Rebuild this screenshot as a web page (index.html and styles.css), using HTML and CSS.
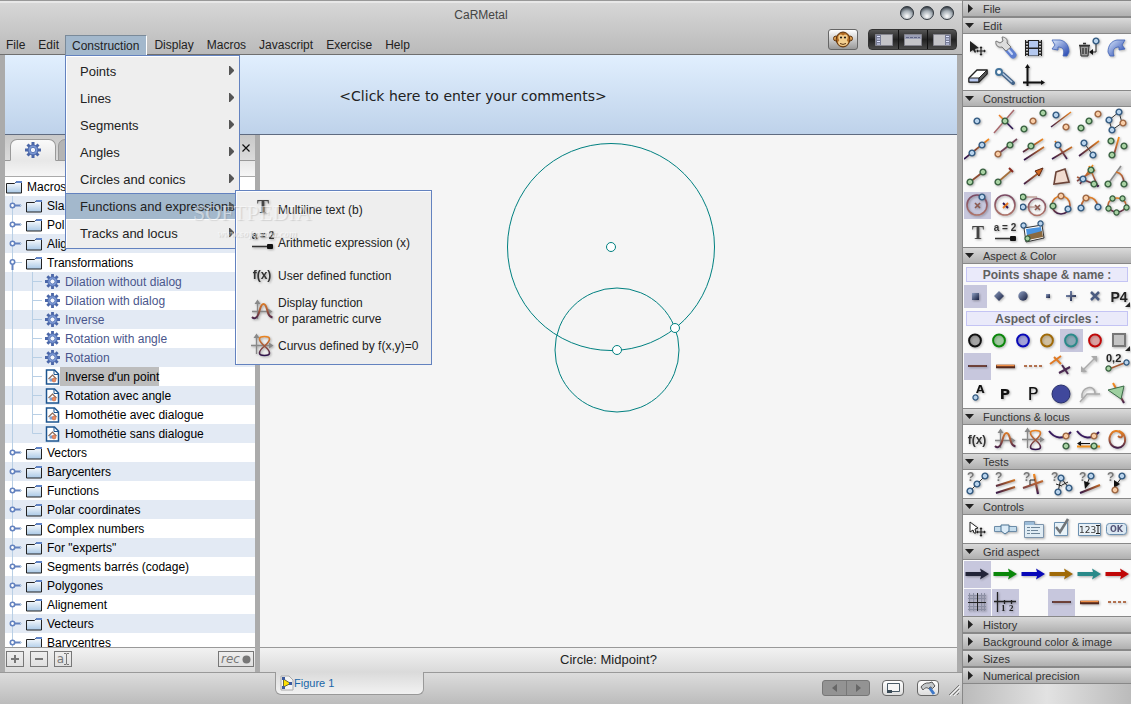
FILE: index.html
```html
<!DOCTYPE html>
<html lang="en">
<head>
    <meta charset="utf-8">
    <title>CaRMetal</title>
    <link rel="stylesheet" href="styles.css">
</head>
<body>
    <!-- Shared icons -->
    <svg class="defs" width="0" height="0" aria-hidden="true">
        <defs>
            <linearGradient id="warm" gradientUnits="userSpaceOnUse" x1="3" y1="24" x2="24" y2="3">
                <stop offset="0" stop-color="#28104e"/><stop offset=".5" stop-color="#8c4a30"/><stop offset="1" stop-color="#f58a1c"/>
            </linearGradient>
            <linearGradient id="warmDown" gradientUnits="userSpaceOnUse" x1="0" y1="3" x2="0" y2="24">
                <stop offset="0" stop-color="#f58a1c"/><stop offset=".5" stop-color="#a65a3c"/><stop offset="1" stop-color="#28104e"/>
            </linearGradient>
            <linearGradient id="rose" gradientUnits="userSpaceOnUse" x1="0" y1="3" x2="0" y2="24">
                <stop offset="0" stop-color="#7a4a64"/><stop offset="1" stop-color="#b07468"/>
            </linearGradient>
            <linearGradient id="folderFill" x1="0" y1="0" x2="0" y2="1">
                <stop offset="0" stop-color="#fff"/><stop offset="1" stop-color="#a9c8e6"/>
            </linearGradient>
            <linearGradient id="blueFill" x1="0" y1="0" x2="1" y2="1">
                <stop offset="0" stop-color="#dbe9fb"/><stop offset="1" stop-color="#1d3fae"/>
            </linearGradient>
            <linearGradient id="slate" x1="0" y1="0" x2="1" y2="1">
                <stop offset="0" stop-color="#8fa0c4"/><stop offset="1" stop-color="#141c3c"/>
            </linearGradient>
            <radialGradient id="ball" cx=".5" cy=".75" r=".7">
                <stop offset="0" stop-color="#fff"/><stop offset=".6" stop-color="#a4adb4"/><stop offset="1" stop-color="#3c444c"/>
            </radialGradient>
        </defs>
        <symbol id="blue" viewBox="0 0 8 8"><circle cx="4" cy="4" r="2.9" fill="#b9d3ec" stroke="#30587f" stroke-width="1.4"/></symbol>
        <symbol id="green" viewBox="0 0 8 8"><circle cx="4" cy="4" r="2.9" fill="#a9d3a4" stroke="#37603f" stroke-width="1.4"/></symbol>
        <symbol id="orange" viewBox="0 0 8 8"><circle cx="4" cy="4" r="2.9" fill="#f8cda6" stroke="#9c6440" stroke-width="1.4"/></symbol>

        <symbol id="down" viewBox="0 0 11 11"><path d="M1 3h9L5.500 8z" fill="#222"/></symbol>
        <symbol id="right" viewBox="0 0 11 11"><path d="M4 1v9l5-4.500z" fill="#222"/></symbol>
        <symbol id="submenu" viewBox="0 0 6 9"><path d="M0 0h1l4 4v1L1 9H0z" fill="#555"/></symbol>

        <symbol id="folder" viewBox="0 0 16 14">
            <path d="M.5 3.500h8l2-2h5v11.500H.5z" fill="url(#folderFill)" stroke="#222"/>
            <path d="M9 3l1.500-2H16v2z" fill="#5f83c6"/>
        </symbol>
        <symbol id="node" viewBox="0 0 21 19">
            <path d="M7.500 0v19" stroke="#b8cfe5"/>
            <path d="M9 9.500h7" stroke="#6382bf" stroke-width="2"/><path d="M15 9.500h2" stroke="#b8cfe5"/>
            <circle cx="7.500" cy="9.500" r="2.200" fill="#fff" stroke="#6382bf" stroke-width="1.600"/>
        </symbol>
        <symbol id="nodeOpen" viewBox="0 0 21 19">
            <path d="M7.500 0v19M10 9.500h7" stroke="#b8cfe5"/>
            <path d="M7.500 11v6" stroke="#6382bf" stroke-width="2"/>
            <circle cx="7.500" cy="9" r="2.200" fill="#fff" stroke="#6382bf" stroke-width="1.600"/>
        </symbol>
        <symbol id="leaf" viewBox="0 0 40 19"><path d="M7.500 0v19M27.500 0v19M28 9.500h9" stroke="#b8cfe5"/></symbol>
        <symbol id="leafLast" viewBox="0 0 40 19"><path d="M7.500 0v19M27.500 0v9.500h9.500" fill="none" stroke="#b8cfe5"/></symbol>
        <symbol id="gear" viewBox="0 0 16 16">
            <g stroke="#4a66a8" stroke-width="3"><path d="M8 0v16M0 8h16M2.500 2.500l11 11M13.500 2.500l-11 11"/></g>
            <circle cx="8" cy="8" r="5" fill="#7d9ad6" stroke="#4a66a8"/>
            <circle cx="8" cy="8" r="2.700" fill="#f3f6fc" stroke="#5d7ab9"/>
        </symbol>
        <symbol id="macro" viewBox="0 0 14 16">
            <path d="M1 1h8l4 4v10H1z" fill="#fff" stroke="#1d5590" stroke-width="1.500"/>
            <path d="M8.500 1v4.500H13" fill="none" stroke="#1d5590"/>
            <path d="M3 10l4-4 4 4" fill="none" stroke="#8a6a5c" stroke-width="1.200"/>
            <circle cx="5.500" cy="11" r="1.700" fill="#7aa4d8"/><circle cx="8.500" cy="11" r="2" fill="#e88a60" stroke="#b85a38" stroke-width=".5"/>
        </symbol>

        <symbol id="graph" viewBox="0 0 27 27">
            <path d="M8.500 22V5M3 14.500h18" stroke="#888" stroke-width="1.300"/><path d="M5.500 7l3-4.500 3 4.500zM19 11.500l4.500 3-4.500 3z" fill="#888"/>
            <path d="M3 20c2.500 2.500 5 1 6.500-3s2-10 5-10 3.500 6 4.500 9 2 4 4.500 4.500" fill="none" stroke="url(#warmDown)" stroke-width="2"/>
        </symbol>
        <symbol id="implicit" viewBox="0 0 27 27">
            <path d="M7.500 22V5M2 13.500h20" stroke="#888" stroke-width="1.300"/><path d="M4.500 6l3-4.500L10.500 6zM20 10.500l4.500 3-4.500 3z" fill="#888"/>
            <path d="M15.500 14C12 11 10.500 9 10.500 7s2-2.500 5-2.500 5 .5 5 2.500-1.500 4-5 7zM15.500 14c-3.500 3-5 5-5 7s2 2.500 5 2.500 5-.5 5-2.500-1.500-4-5-7z" fill="none" stroke="url(#warmDown)" stroke-width="1.600"/>
        </symbol>
        <symbol id="dashThin" viewBox="0 0 27 27"><path d="M4 13h19" stroke="#2e1018" stroke-width="1.500"/><path d="M5 13h17" stroke="#a65428" stroke-width=".7"/></symbol>
        <symbol id="dashThick" viewBox="0 0 27 27"><path d="M4 13.500h19" stroke="#54281c" stroke-width="3.500"/><path d="M4.500 12.500h18" stroke="#f09048" stroke-width="1.500"/></symbol>
        <symbol id="dashDots" viewBox="0 0 27 27"><path d="M4 13h19" stroke="#a04a1c" stroke-width="1.600" stroke-dasharray="3 2"/></symbol>
        <symbol id="arrow" viewBox="0 0 27 27"><path d="M1.500 11H17l-1-3.500 9 5.500-9 5.500 1-3.500H1.500z" fill="currentColor"/></symbol>
        <symbol id="ring" viewBox="0 0 23 23"><circle cx="11" cy="11.500" r="5.900" fill="currentColor" fill-opacity=".3"/><circle cx="11" cy="11.500" r="5.900" fill="none" stroke="currentColor" stroke-width="2"/></symbol>
        <symbol id="move" viewBox="0 0 27 27">
            <path d="M17 12v8M13 16h8M16 13l1-1 1 1M16 19l1 1 1-1M14 15l-1 1 1 1M20 15l1 1-1 1" fill="none" stroke="#222" stroke-width="1.200"/>
        </symbol>
    </svg>

    <div class="app">
        <header class="header">
            <div class="title-row">
                <h1>CaRMetal</h1>
                <div class="window-buttons">
                    <button aria-label="Minimize"><svg width="14" height="14"><circle cx="7" cy="7" r="6.500" fill="url(#ball)" stroke="#343a40"/></svg></button>
                    <button aria-label="Zoom"><svg width="14" height="14"><circle cx="7" cy="7" r="6.500" fill="url(#ball)" stroke="#343a40"/></svg></button>
                    <button aria-label="Close"><svg width="14" height="14"><circle cx="7" cy="7" r="6.500" fill="url(#ball)" stroke="#343a40"/></svg></button>
                </div>
            </div>
            <div class="menu-row">
                <nav class="menubar">
                    <button>File</button>
                    <button>Edit</button>
                    <div class="menu-holder">
                        <button class="open">Construction</button>
                        <div class="menu">
                            <button>Points<svg width="6" height="9"><use href="#submenu"/></svg></button>
                            <button>Lines<svg width="6" height="9"><use href="#submenu"/></svg></button>
                            <button>Segments<svg width="6" height="9"><use href="#submenu"/></svg></button>
                            <button>Angles<svg width="6" height="9"><use href="#submenu"/></svg></button>
                            <button>Circles and conics<svg width="6" height="9"><use href="#submenu"/></svg></button>
                            <button class="selected">Functions and expressions<svg width="6" height="9"><use href="#submenu"/></svg></button>
                            <button>Tracks and locus<svg width="6" height="9"><use href="#submenu"/></svg></button>
                            <div class="submenu">
                                <button><svg width="27" height="27"><text x="14" y="17" text-anchor="middle" class="serif-glyph">T</text></svg>Multiline text (b)</button>
                                <button><svg width="27" height="27"><text x="14" y="10" text-anchor="middle" class="bold-glyph">a = 2</text><path d="M3 17.500h18" stroke="#333" stroke-width="1.500"/><rect x="18" y="15" width="6" height="5" rx="1" fill="#111"/></svg>Arithmetic expression (x)</button>
                                <button><svg width="27" height="27"><text x="13" y="17" text-anchor="middle" class="fx-glyph">f(x)</text></svg>User defined function</button>
                                <button class="two-lines"><svg width="27" height="27"><use href="#graph"/></svg><span>Display function<br>or parametric curve</span></button>
                                <button><svg width="27" height="27"><use href="#implicit"/></svg>Curvus defined by f(x,y)=0</button>
                            </div>
                            <div class="watermark">
                                <span class="brand">SOFTPEDIA<sup>™</sup></span>
                                <span class="site">www.softpedia.com</span>
                            </div>
                        </div>
                    </div>
                    <button>Display</button>
                    <button>Macros</button>
                    <button>Javascript</button>
                    <button>Exercise</button>
                    <button>Help</button>
                </nav>
                <div class="header-tools">
                    <button class="monkey" aria-label="Monkey">
                        <svg width="20" height="17" viewBox="0 0 20 17">
                            <g stroke="#5c3410"><circle cx="3" cy="7.500" r="2.500" fill="#e0a050"/><circle cx="17" cy="7.500" r="2.500" fill="#e0a050"/><ellipse cx="10" cy="8.500" rx="6.800" ry="7.500" fill="#b06a22"/></g>
                            <ellipse cx="7.800" cy="6.500" rx="2.500" ry="3" fill="#f3cf90"/><ellipse cx="12.200" cy="6.500" rx="2.500" ry="3" fill="#f3cf90"/><ellipse cx="10" cy="11.500" rx="5" ry="3.500" fill="#f3cf90"/>
                            <circle cx="8" cy="6.500" r="1.100" fill="#222"/><circle cx="12" cy="6.500" r="1.100" fill="#222"/><path d="M7 12.500q3 1.800 6 0" fill="none" stroke="#5c3410"/>
                        </svg>
                    </button>
                    <div class="layouts">
                        <button aria-label="Left panel"><svg width="18" height="12"><path d="M.5.5h17v11H.5z" fill="#c4c4c8" stroke="#85858e"/><path d="M1 1h5v10H1z" fill="#777c96"/><path d="M2 2.500h3M2 5h3M2 7.500h3M2 10h3" stroke="#dfe4ff"/></svg></button>
                        <button aria-label="Top panel"><svg width="18" height="12"><path d="M.5.5h17v11H.5z" fill="#c4c4c8" stroke="#85858e"/><path d="M1 1h16v4H1z" fill="#9a9eb4"/><path d="M2 3.500h3M6 3.500h3M10 3.500h3M14 3.500h2" stroke="#5f6484"/></svg></button>
                        <button aria-label="Right panel"><svg width="18" height="12"><path d="M.5.5h17v11H.5z" fill="#c4c4c8" stroke="#85858e"/><path d="M12 1h5v10h-5z" fill="#777c96"/><path d="M13 2.500h3M13 5h3M13 7.500h3M13 10h3" stroke="#dfe4ff"/></svg></button>
                    </div>
                </div>
            </div>
        </header>

        <main class="workspace">
            <input class="comments" type="text" aria-label="Comments" value="&lt;Click here to enter your comments&gt;">
            <div class="panes">
                <aside class="sidebar">
                    <div class="tabs">
                        <button class="tab active" aria-label="Macros"><svg width="16" height="16"><use href="#gear"/></svg></button>
                        <button class="tab" aria-label="Properties"></button>
                        <button class="close" aria-label="Close panel"><svg width="8" height="8"><path d="M.5.5l7 7M7.500.5l-7 7" stroke="#111" stroke-width="1.200"/></svg></button>
                    </div>
                    <div class="tab-strip"></div>
                    <ul class="tree">
                        <li class="root"><svg width="16" height="14"><use href="#folder"/></svg><span>Macros</span></li>
                        <li><svg width="21" height="19"><use href="#node"/></svg><svg width="16" height="14"><use href="#folder"/></svg><span>Sla</span></li>
                        <li><svg width="21" height="19"><use href="#node"/></svg><svg width="16" height="14"><use href="#folder"/></svg><span>Pol</span></li>
                        <li><svg width="21" height="19"><use href="#node"/></svg><svg width="16" height="14"><use href="#folder"/></svg><span>Alig</span></li>
                        <li><svg width="21" height="19"><use href="#nodeOpen"/></svg><svg width="16" height="14"><use href="#folder"/></svg><span>Transformations</span></li>
                        <li class="builtin"><svg width="40" height="19"><use href="#leaf"/></svg><svg width="15" height="15"><use href="#gear"/></svg><span>Dilation without dialog</span></li>
                        <li class="builtin"><svg width="40" height="19"><use href="#leaf"/></svg><svg width="15" height="15"><use href="#gear"/></svg><span>Dilation with dialog</span></li>
                        <li class="builtin"><svg width="40" height="19"><use href="#leaf"/></svg><svg width="15" height="15"><use href="#gear"/></svg><span>Inverse</span></li>
                        <li class="builtin"><svg width="40" height="19"><use href="#leaf"/></svg><svg width="15" height="15"><use href="#gear"/></svg><span>Rotation with angle</span></li>
                        <li class="builtin"><svg width="40" height="19"><use href="#leaf"/></svg><svg width="15" height="15"><use href="#gear"/></svg><span>Rotation</span></li>
                        <li class="picked"><svg width="40" height="19"><use href="#leaf"/></svg><svg width="15" height="16"><use href="#macro"/></svg><span>Inverse d'un point</span></li>
                        <li><svg width="40" height="19"><use href="#leaf"/></svg><svg width="15" height="16"><use href="#macro"/></svg><span>Rotation avec angle</span></li>
                        <li><svg width="40" height="19"><use href="#leaf"/></svg><svg width="15" height="16"><use href="#macro"/></svg><span>Homothétie avec dialogue</span></li>
                        <li><svg width="40" height="19"><use href="#leafLast"/></svg><svg width="15" height="16"><use href="#macro"/></svg><span>Homothétie sans dialogue</span></li>
                        <li><svg width="21" height="19"><use href="#node"/></svg><svg width="16" height="14"><use href="#folder"/></svg><span>Vectors</span></li>
                        <li><svg width="21" height="19"><use href="#node"/></svg><svg width="16" height="14"><use href="#folder"/></svg><span>Barycenters</span></li>
                        <li><svg width="21" height="19"><use href="#node"/></svg><svg width="16" height="14"><use href="#folder"/></svg><span>Functions</span></li>
                        <li><svg width="21" height="19"><use href="#node"/></svg><svg width="16" height="14"><use href="#folder"/></svg><span>Polar coordinates</span></li>
                        <li><svg width="21" height="19"><use href="#node"/></svg><svg width="16" height="14"><use href="#folder"/></svg><span>Complex numbers</span></li>
                        <li><svg width="21" height="19"><use href="#node"/></svg><svg width="16" height="14"><use href="#folder"/></svg><span>For "experts"</span></li>
                        <li><svg width="21" height="19"><use href="#node"/></svg><svg width="16" height="14"><use href="#folder"/></svg><span>Segments barrés (codage)</span></li>
                        <li><svg width="21" height="19"><use href="#node"/></svg><svg width="16" height="14"><use href="#folder"/></svg><span>Polygones</span></li>
                        <li><svg width="21" height="19"><use href="#node"/></svg><svg width="16" height="14"><use href="#folder"/></svg><span>Alignement</span></li>
                        <li><svg width="21" height="19"><use href="#node"/></svg><svg width="16" height="14"><use href="#folder"/></svg><span>Vecteurs</span></li>
                        <li><svg width="21" height="19"><use href="#node"/></svg><svg width="16" height="14"><use href="#folder"/></svg><span>Barycentres</span></li>
                    </ul>
                    <div class="macro-bar">
                        <button aria-label="Add"><svg width="10" height="10"><path d="M5 1v8M1 5h8" stroke="#777" stroke-width="2"/></svg></button>
                        <button aria-label="Remove"><svg width="10" height="10"><path d="M1 5h8" stroke="#777" stroke-width="2"/></svg></button>
                        <button class="rename" aria-label="Rename">a<svg width="5" height="12"><path d="M0 .5h2l.5 1 .5-1h2M2.500 1v10M0 11.500h2l.5-1 .5 1h2" fill="none" stroke="#777"/></svg></button>
                        <button class="rec">rec<svg width="9" height="9"><circle cx="4.500" cy="4.500" r="4" fill="#777"/></svg></button>
                    </div>
                </aside>
                <section class="figure">
                    <svg class="canvas">
                        <g fill="none" stroke="#008080"><circle cx="351" cy="112" r="103.500"/><circle cx="357" cy="215" r="62"/></g>
                        <g fill="#fff" stroke="#008080"><circle cx="351" cy="112" r="4.500"/><circle cx="357" cy="215" r="4.500"/><circle cx="415" cy="193" r="4.500"/></g>
                    </svg>
                    <p class="status">Circle: Midpoint?</p>
                </section>
            </div>
        </main>

        <footer class="footer">
            <button class="figure-tab">
                <svg width="14" height="16"><path d="M1 1h8l4 4v10H1z" fill="#f4f4f4" stroke="#aaa"/><path d="M3.500 4v8l7-3.500z" fill="#ffe100" stroke="#6a6a30"/><g fill="#3c5a9c"><path d="M2 2h3v3H2zM2 11h3v3H2zM9 7h3v3H9z"/></g></svg>
                Figure 1
            </button>
            <div class="footer-tools">
                <div class="pager">
                    <button aria-label="Previous"><svg width="6" height="8"><path d="M5 0v8L0 4z" fill="#666"/></svg></button>
                    <button aria-label="Next"><svg width="6" height="8"><path d="M1 0v8l5-4z" fill="#666"/></svg></button>
                </div>
                <button class="small" aria-label="Window size"><svg width="13" height="10"><path d="M.5.5h12v8H.5z" fill="#f6f6f6" stroke="#4a5a66"/><path d="M0 7h5v3H0z" fill="#3a4a56"/></svg></button>
                <button class="small" aria-label="Preferences"><svg width="16" height="14"><path d="M9 6l5 7" stroke="#3e78c8" stroke-width="3"/><path d="M1 6C3 3 6 1.500 9 2l3-1 3 4-2.500 2.500-2-1.500-2 1.500C6 6 5 7 3 9z" fill="#c4c8ca" stroke="#555"/></svg></button>
                <svg class="grip" width="12" height="12"><path d="M1 11L11 1M5 11l6-6M9 11l2-2" stroke="#777"/><path d="M2 12L12 2M6 12l6-6" stroke="#f4f4f4"/></svg>
            </div>
        </footer>
    </div>

    <aside class="palette">
        <button class="section"><svg width="11" height="11"><use href="#right"/></svg><span>File</span></button>
        <button class="section"><svg width="11" height="11"><use href="#down"/></svg><span>Edit</span></button>
        <div class="tools">
            <button aria-label="Move"><svg><path d="M6 6v11l3-2 2 3 1-1-1-3 4-1z" fill="#222"/><use href="#move"/></svg></button>
            <button aria-label="Settings"><svg><path d="M15 13l6 7" stroke="#5f7fd0" stroke-width="7" stroke-linecap="round"/><path d="M14 12l6 7" stroke="#c9d8fa" stroke-width="2" stroke-linecap="round"/><path d="M4 6l4 2 3-2-1-4c4 0 6 3 5 6l4 4-5 4-4-4c-4 1-7-2-6-6z" fill="#ddd" stroke="#777"/></svg></button>
            <button aria-label="Animation"><svg><path d="M5 5h17v16H5z" fill="#222"/><path d="M9 6h9v6.500H9zM9 14h9v6.500H9z" fill="#b4c8ee"/><path d="M7 5v16M20 5v16" stroke="#fff" stroke-width="1.500" stroke-dasharray="1.500 1.500"/></svg></button>
            <button aria-label="Undo"><svg><path d="M4 5h8c6 1 9 6 9 12l-2 4h-4c2-6 0-9-5-9v3L4 14l3-4z" fill="url(#blueFill)" stroke="#3f62b8" stroke-width=".8"/></svg></button>
            <button aria-label="Delete"><svg><path d="M4 11h9l-1 10H5z" fill="#999" stroke="#333"/><path d="M3 10.500h11M7 8.500h3M7 13v6M10 13v6" stroke="#333" stroke-width="1.300"/><path d="M20 8v9h-4" fill="none" stroke="#222"/><path d="M17 14v6l-4-3z" fill="#111"/><use href="#blue" x="16" y="2" width="8" height="8"/></svg></button>
            <button aria-label="Redo"><svg><path d="M21 5h-8C7 6 4 11 4 17l2 4h4c-2-6 0-9 5-9v3l6-1-3-4z" fill="url(#blueFill)" stroke="#3f62b8" stroke-width=".8"/></svg></button>
            <button aria-label="Erase"><svg><path d="M5 15l8-8h10v4l-8 8H5z" fill="#fff" stroke="#222" stroke-width="1.300"/><path d="M5 15h10v4H5z" fill="#b8c8f0" stroke="#222"/><path d="M15 15v4l8-8V7z" fill="#555" stroke="#222"/></svg></button>
            <button aria-label="Edit point"><svg><path d="M11 11l10 9" stroke="#44648a" stroke-width="4" stroke-linecap="round"/><path d="M10 10l10 9" stroke="#b8cde4" stroke-width="1.500"/><circle cx="7" cy="9" r="3" fill="#fff" stroke="#44749c" stroke-width="2"/></svg></button>
            <button aria-label="Axes"><svg><path d="M7.500 23V4M3 19.500h20" stroke="#111" stroke-width="2"/><path d="M5 5l2.500-4L10 5zM21 17l4 2.500-4 2.500z" fill="#111"/></svg></button>
        </div>

        <button class="section"><svg width="11" height="11"><use href="#down"/></svg><span>Construction</span></button>
        <div class="tools">
            <button aria-label="Point"><svg><use href="#blue" x="9" y="9" width="8" height="8"/></svg></button>
            <button aria-label="Intersection"><svg fill="none" stroke-width="1.500"><path d="M2 25L22 2" stroke="#a8686c"/><path d="M7 7l7 7" stroke="#ee7c20"/><path d="M14 14l7 7" stroke="#28104e"/><use href="#green" x="9" y="9" width="8" height="8"/></svg></button>
            <button aria-label="Midpoint"><svg><use href="#green" x="0" y="17" width="8" height="8"/><use href="#orange" x="9" y="9" width="8" height="8"/><use href="#green" x="19" y="1" width="8" height="8"/></svg></button>
            <button aria-label="Axial symmetry"><svg><path d="M3 19L23 4" stroke="url(#warm)" stroke-width="1.500"/><use href="#blue" x="4" y="3" width="8" height="8"/><use href="#orange" x="14" y="15" width="8" height="8"/></svg></button>
            <button aria-label="Central symmetry"><svg><use href="#green" x="1" y="16" width="8" height="8"/><use href="#green" x="9" y="9" width="8" height="8"/><use href="#orange" x="18" y="2" width="8" height="8"/></svg></button>
            <button aria-label="Translation"><svg><path d="M15 4L5 12l3 10 10-7z" fill="none" stroke="#333"/><use href="#blue" x="11" y="0" width="8" height="8"/><use href="#blue" x="1" y="8" width="8" height="8"/><use href="#orange" x="15" y="11" width="8" height="8"/><use href="#blue" x="4" y="18" width="8" height="8"/></svg></button>

            <button aria-label="Line"><svg><path d="M0 23L25 3" stroke="url(#warm)" stroke-width="1.700"/><use href="#blue" x="4" y="13" width="8" height="8"/><use href="#blue" x="14" y="5" width="8" height="8"/></svg></button>
            <button aria-label="Ray"><svg><path d="M6 18L25 3" stroke="#74475a" stroke-width="1.700"/><use href="#orange" x="2" y="14" width="8" height="8"/><use href="#green" x="14" y="5" width="8" height="8"/></svg></button>
            <button aria-label="Parallel"><svg><path d="M3 16L23 3M4 24l20-13" stroke="url(#warm)" stroke-width="1.700"/><use href="#green" x="7" y="6" width="8" height="8"/></svg></button>
            <button aria-label="Perpendicular"><svg><path d="M4 23l20-12" stroke="url(#warm)" stroke-width="1.700"/><path d="M7 5l12 18" stroke="url(#warmDown)" stroke-width="1.700"/><use href="#blue" x="6" y="5" width="8" height="8"/></svg></button>
            <button aria-label="Perpendicular bisector"><svg><path d="M3 20L23 5" stroke="url(#warm)" stroke-width="1.700"/><path d="M8 7l9 12" stroke="#444"/><use href="#blue" x="4" y="3" width="8" height="8"/><use href="#blue" x="13" y="15" width="8" height="8"/></svg></button>
            <button aria-label="Angle bisector"><svg><path d="M15 1L9 22" stroke="url(#warmDown)" stroke-width="1.800"/><use href="#green" x="3" y="1" width="8" height="8"/><use href="#green" x="16" y="6" width="8" height="8"/><use href="#green" x="4" y="15" width="8" height="8"/></svg></button>

            <button aria-label="Segment"><svg><path d="M6 18L19 8" stroke="#8a4a30" stroke-width="1.700"/><use href="#green" x="2" y="14" width="8" height="8"/><use href="#green" x="15" y="4" width="8" height="8"/></svg></button>
            <button aria-label="Fixed segment"><svg><path d="M6 18L20 6" stroke="#a4703c" stroke-width="1.700"/><path d="M17 4l4 4" stroke="#8a2a20" stroke-width="2"/><use href="#green" x="2" y="14" width="8" height="8"/></svg></button>
            <button aria-label="Vector"><svg><path d="M4 20L20 8" stroke="url(#warm)" stroke-width="1.700"/><path d="M15 7l8-3-4 8z" fill="#d06820" stroke="#5c2410"/></svg></button>
            <button aria-label="Polygon"><svg><path d="M8 8l9-3 4 13-15 2z" fill="#f1dcd0" stroke="#6c4438" stroke-width="1.600"/></svg></button>
            <button aria-label="Triangle"><svg><path d="M17 1L4 20M13 2l9 21M1 13l22 9M1 17l18-11" stroke="url(#warmDown)" stroke-width="1.600"/><use href="#green" x="11" y="2" width="8" height="8"/><use href="#blue" x="3" y="11" width="8" height="8"/><use href="#green" x="14" y="16" width="8" height="8"/></svg></button>
            <button aria-label="Angle"><svg fill="none"><path d="M4 20L17 2" stroke="#888" stroke-width="1.600"/><path d="M12 8c6 1 8 6 8 12" stroke="url(#warmDown)" stroke-width="1.700"/><use href="#green" x="0" y="16" width="8" height="8"/><use href="#green" x="16" y="16" width="8" height="8"/></svg></button>

            <button class="on" aria-label="Circle"><svg><circle cx="13" cy="13" r="10" fill="none" stroke="url(#rose)" stroke-width="1.600"/><path d="M11 11l5 5M16 11l-5 5" stroke="#8c5a50" stroke-width="1.600"/><use href="#blue" x="14" y="1" width="8" height="8"/></svg></button>
            <button aria-label="Fixed circle"><svg><circle cx="13" cy="13" r="10" fill="none" stroke="url(#rose)" stroke-width="1.600"/><path d="M11 11l5 5" stroke="#28104e" stroke-width="1.800"/><path d="M16 11l-5 5" stroke="#e87820" stroke-width="1.800"/></svg></button>
            <button aria-label="Compass circle"><svg><path d="M2 5h15M2 15h15" stroke="#aa7a70"/><circle cx="17" cy="15" r="8.500" fill="none" stroke="url(#rose)" stroke-width="1.600"/><path d="M15 13l5 5M20 13l-5 5" stroke="#8c5a50" stroke-width="1.600"/><use href="#green" x="-1" y="1" width="8" height="8"/><use href="#blue" x="-1" y="11" width="8" height="8"/></svg></button>
            <button aria-label="Circle by three points"><svg><circle cx="13" cy="13" r="9" fill="none" stroke="url(#warmDown)" stroke-width="1.700"/><use href="#orange" x="9" y="0" width="8" height="8"/><use href="#green" x="1" y="10" width="8" height="8"/><use href="#blue" x="16" y="13" width="8" height="8"/></svg></button>
            <button aria-label="Arc"><svg><path d="M5 16C6 2 20 2 22 15" fill="none" stroke="url(#warmDown)" stroke-width="1.700"/><use href="#blue" x="1" y="12" width="8" height="8"/><use href="#orange" x="6" y="2" width="8" height="8"/><use href="#blue" x="18" y="11" width="8" height="8"/></svg></button>
            <button aria-label="Conic"><svg><ellipse cx="13" cy="13" rx="9" ry="7" fill="none" stroke="url(#warmDown)" stroke-width="1.600"/><use href="#green" x="5" y="3" width="7" height="7"/><use href="#green" x="15" y="3" width="7" height="7"/><use href="#green" x="1" y="13" width="7" height="7"/><use href="#green" x="19" y="12" width="7" height="7"/><use href="#green" x="9" y="17" width="7" height="7"/></svg></button>

            <button aria-label="Text"><svg><text x="14" y="19" text-anchor="middle" class="serif-glyph">T</text></svg></button>
            <button aria-label="Expression"><svg><text x="13" y="11" text-anchor="middle" class="bold-glyph">a = 2</text><path d="M3 18.500h18" stroke="#333" stroke-width="1.500"/><rect x="18" y="16" width="6" height="5" rx="1" fill="#111"/></svg></button>
            <button aria-label="Image"><svg><path d="M4 8l18-3 2 13-18 4z" fill="#fff" stroke="#333"/><path d="M6 9l15-2 1 6-15 3z" fill="#4a94e0"/><path d="M7 15l15-4 1 6-15 3z" fill="#8a6a40"/><use href="#blue" x="0" y="2" width="7" height="7"/><use href="#blue" x="17" y="0" width="7" height="7"/><use href="#green" x="4" y="15" width="7" height="7"/></svg></button>
        </div>

        <button class="section"><svg width="11" height="11"><use href="#down"/></svg><span>Aspect &amp; Color</span></button>
        <h2>Points shape &amp; name :</h2>
        <div class="tools seven">
            <button class="on" aria-label="Square"><svg><path d="M8 8h7v7H8z" fill="url(#slate)"/></svg></button>
            <button aria-label="Diamond"><svg><path d="M11 6l5 5-5 5-5-5z" fill="url(#slate)"/></svg></button>
            <button aria-label="Disc"><svg><circle cx="11" cy="11" r="4.700" fill="url(#slate)"/></svg></button>
            <button aria-label="Dot"><svg><path d="M10 9h4v4h-4z" fill="url(#slate)"/></svg></button>
            <button aria-label="Plus"><svg><path d="M10 6h2v4h4v2h-4v4h-2v-4H6v-2h4z" fill="url(#slate)"/></svg></button>
            <button aria-label="Cross"><svg><path d="M7 7l8 8M15 7l-8 8" stroke="#4c5c80" stroke-width="2.500"/></svg></button>
            <button aria-label="Name"><svg><text x="11" y="17" text-anchor="middle" class="name-glyph">P4</text><path d="M22 17v5h-5z" fill="#222"/></svg></button>
        </div>
        <h2>Aspect of circles :</h2>
        <div class="tools seven">
            <button class="black" aria-label="Black"><svg><use href="#ring"/></svg></button>
            <button class="green" aria-label="Green"><svg><use href="#ring"/></svg></button>
            <button class="blue" aria-label="Blue"><svg><use href="#ring"/></svg></button>
            <button class="brown" aria-label="Brown"><svg><use href="#ring"/></svg></button>
            <button class="teal on" aria-label="Teal"><svg><use href="#ring"/></svg></button>
            <button class="red" aria-label="Red"><svg><use href="#ring"/></svg></button>
            <button aria-label="Other color"><svg><path d="M5 5h12v12H5z" fill="#c4c4c4" stroke="#777" stroke-width="2"/><path d="M22 17v5h-5z" fill="#222"/></svg></button>
        </div>
        <div class="tools">
            <button class="on" aria-label="Thin"><svg><use href="#dashThin"/></svg></button>
            <button aria-label="Thick"><svg><use href="#dashThick"/></svg></button>
            <button aria-label="Dashed"><svg><use href="#dashDots"/></svg></button>
            <button aria-label="Partial"><svg fill="none" stroke-width="2"><path d="M2 11l11-8M6 4l7 7" stroke="#e07a24"/><path d="M11 20l11-6M14 12l6 9" stroke="#4a2850"/></svg></button>
            <button aria-label="Vector"><svg><path d="M7 17L19 5" stroke="#aaa" stroke-width="1.500"/><path d="M5 19v-6l6 6zM21 3v6l-6-6z" fill="#aaa"/></svg></button>
            <button aria-label="Show value"><svg><text x="2" y="9" class="value-glyph">0,2</text><path d="M5 16l18-7" stroke="#a45a34" stroke-width="1.500"/><use href="#green" x="1" y="12" width="7" height="7"/><use href="#blue" x="19" y="6" width="7" height="7"/></svg></button>
            <button aria-label="Show name"><svg><text x="12" y="12" class="letter-glyph">A</text><use href="#blue" x="8" y="13" width="7" height="7"/></svg></button>
            <button aria-label="Bold"><svg><text x="13" y="18" text-anchor="middle" class="heavy-glyph">P</text></svg></button>
            <button aria-label="Large"><svg><text x="13" y="19" text-anchor="middle" class="large-glyph">P</text></svg></button>
            <button aria-label="Filled"><svg><circle cx="13" cy="13" r="9" fill="#40489c" stroke="#28306c"/></svg></button>
            <button aria-label="Obtuse angle"><svg fill="none" stroke="#aaa" stroke-width="1.500"><path d="M4 21l7-8h13M6 17c-2-12 14-14 13-4"/></svg></button>
            <button aria-label="Solid"><svg><path d="M9 2l11 20" stroke="url(#warmDown)" stroke-width="2"/><path d="M4 9l16-4-3 13z" fill="#9ed0a0" stroke="#3c6c48"/></svg></button>
        </div>

        <button class="section"><svg width="11" height="11"><use href="#down"/></svg><span>Functions &amp; locus</span></button>
        <div class="tools">
            <button aria-label="Function"><svg><text x="13" y="18" text-anchor="middle" class="fx-glyph">f(x)</text></svg></button>
            <button aria-label="Graph"><svg><use href="#graph"/></svg></button>
            <button aria-label="Implicit plot"><svg><use href="#implicit"/></svg></button>
            <button aria-label="Track"><svg><path d="M1 5c6 8 14 9 22 1" fill="none" stroke="#36185c" stroke-width="2"/><use href="#orange" x="14" y="6" width="8" height="8"/><use href="#green" x="14" y="16" width="8" height="8"/></svg></button>
            <button aria-label="Locus"><svg><path d="M1 5c6 8 14 9 22 1" fill="none" stroke="#36185c" stroke-width="2"/><path d="M1 20.500h23" stroke="#f0901c" stroke-width="2"/><path d="M3 17.500h11" stroke="#111"/><path d="M5 15v5l-4-2.500z" fill="#111"/><use href="#orange" x="14" y="6" width="8" height="8"/><use href="#green" x="14" y="16" width="8" height="8"/></svg></button>
            <button aria-label="Closed locus"><svg><path d="M14 10c3 3 6 0 3-3S9 4 6.500 9 6 20 12 21.500s10-4 9-9.500-4-6-6-7" fill="none" stroke="url(#warmDown)" stroke-width="1.900"/></svg></button>
        </div>

        <button class="section"><svg width="11" height="11"><use href="#down"/></svg><span>Tests</span></button>
        <div class="tools">
            <button aria-label="Aligned"><svg><text x="3" y="10" class="ask-glyph">?</text><path d="M6 20L21 5" stroke="#333"/><use href="#blue" x="2" y="16" width="8" height="8"/><use href="#blue" x="9" y="9" width="8" height="8"/><use href="#blue" x="17" y="1" width="8" height="8"/></svg></button>
            <button aria-label="Parallel?"><svg><text x="3" y="10" class="ask-glyph">?</text><path d="M4 15l19-6M4 22l19-6" stroke="url(#warm)" stroke-width="2"/></svg></button>
            <button aria-label="Perpendicular?"><svg><text x="3" y="10" class="ask-glyph">?</text><path d="M3 17l20-7M14 3l4 20" stroke="url(#warmDown)" stroke-width="2.200"/><path d="M10 14V9h5" fill="none" stroke="#222"/></svg></button>
            <button aria-label="Equal distance"><svg><text x="3" y="10" class="ask-glyph">?</text><path d="M10 21l3-14 8 10M8 13l6 2M14 14l6-3" stroke="#222" fill="none"/><use href="#blue" x="9" y="3" width="8" height="8"/><use href="#blue" x="6" y="17" width="8" height="8"/><use href="#blue" x="17" y="13" width="8" height="8"/></svg></button>
            <button aria-label="On object"><svg><text x="3" y="10" class="ask-glyph">?</text><path d="M4 22l20-8" stroke="url(#warm)" stroke-width="2"/><path d="M14 6l-4 9" stroke="#222"/><path d="M8 10l6 2-5 6z" fill="#111"/><use href="#blue" x="11" y="1" width="8" height="8"/></svg></button>
            <button aria-label="In area"><svg><text x="3" y="10" class="ask-glyph">?</text><path d="M18 6l-6 8" stroke="#222"/><path d="M10 9l6 4-6 4z" fill="#111"/><use href="#blue" x="14" y="1" width="8" height="8"/><use href="#orange" x="7" y="15" width="8" height="8"/></svg></button>
        </div>

        <button class="section"><svg width="11" height="11"><use href="#down"/></svg><span>Controls</span></button>
        <div class="tools">
            <button aria-label="Edit controls"><svg><path d="M6 6v10l3-2 1 3h2l-1-4 3-1z" fill="#fff" stroke="#222"/><use href="#move"/></svg></button>
            <button aria-label="Slider"><svg><path d="M2.500 10.500h22v5h-22z" fill="#c4dcec" stroke="#6c8ca8"/><path d="M9 9h8v6l-4 3-4-3z" fill="#dcecf8" stroke="#4c7494"/></svg></button>
            <button aria-label="Popup"><svg><path d="M4.500 5.500h10v3h9v13h-19z" fill="#e0ecf4" stroke="#7c94ac"/><path d="M5 6h9v3H5z" fill="#9cbcd8"/><path d="M7 11.500h3M11 11.500h9M7 14.500h3M11 14.500h7M7 17.500h3M11 17.500h9" stroke="#6c8498"/></svg></button>
            <button aria-label="Checkbox"><svg><path d="M6.500 6.500h13v13h-13z" fill="#e8f2f8" stroke="#6c90b0"/><path d="M8 11l4 5 8-13" fill="none" stroke="#707478" stroke-width="2.500"/></svg></button>
            <button aria-label="Text field"><svg><path d="M2.500 7.500h22v12h-22z" fill="#e8f0f6" stroke="#6c90b0"/><text x="3" y="17" class="field-glyph">123</text><path d="M20 9.500h4M22 9v9M20 17.500h4" stroke="#222"/></svg></button>
            <button aria-label="Button"><svg><rect x="2.500" y="7.500" width="20" height="11" rx="3" fill="#dce8f2" stroke="#6c90b0"/><text x="12.500" y="16" text-anchor="middle" class="ok-glyph">OK</text></svg></button>
        </div>

        <button class="section"><svg width="11" height="11"><use href="#down"/></svg><span>Grid aspect</span></button>
        <div class="tools">
            <button class="ink on" aria-label="Black grid"><svg><use href="#arrow"/></svg></button>
            <button class="green" aria-label="Green grid"><svg><use href="#arrow"/></svg></button>
            <button class="blue" aria-label="Blue grid"><svg><use href="#arrow"/></svg></button>
            <button class="brown" aria-label="Brown grid"><svg><use href="#arrow"/></svg></button>
            <button class="teal" aria-label="Teal grid"><svg><use href="#arrow"/></svg></button>
            <button class="red" aria-label="Red grid"><svg><use href="#arrow"/></svg></button>
            <button class="on" aria-label="Show grid"><svg><path d="M5.500 4v18M9.500 4v18M17.500 4v18M20.500 4v18M4 6.500h18M4 9.500h18M4 17.500h18M4 20.500h18" stroke="#8c90a4"/><path d="M13.500 4v18M4 13.500h18" stroke="#222"/></svg></button>
            <button class="on" aria-label="Show axes"><svg><path d="M5.500 3v20M2 12.500h22M12.500 11v4M19.500 11v4" stroke="#222" stroke-width="1.300"/><text x="9" y="22" class="axis-glyph">1</text><text x="17" y="22" class="axis-glyph">2</text></svg></button>
            <span></span>
            <button class="on" aria-label="Thin grid"><svg><use href="#dashThin"/></svg></button>
            <button aria-label="Thick grid"><svg><use href="#dashThick"/></svg></button>
            <button aria-label="Dashed grid"><svg><use href="#dashDots"/></svg></button>
        </div>

        <button class="section"><svg width="11" height="11"><use href="#right"/></svg><span>History</span></button>
        <button class="section"><svg width="11" height="11"><use href="#right"/></svg><span>Background color &amp; image</span></button>
        <button class="section"><svg width="11" height="11"><use href="#right"/></svg><span>Sizes</span></button>
        <button class="section"><svg width="11" height="11"><use href="#right"/></svg><span>Numerical precision</span></button>
    </aside>
</body>
</html>
```
FILE: styles.css
```css
* {
    box-sizing: border-box;
}
body {
    margin: 0;
    height: 100vh;
    display: flex;
    overflow: hidden;
    font-family: "Liberation Sans", Arial, sans-serif;
    font-size: 12px;
    color: #222;
    background: #d0d0d0;
}
button {
    font: inherit;
    color: inherit;
    margin: 0;
    padding: 0;
    border: none;
    background: none;
}
svg {
    flex: none;
    display: block;
}
.defs {
    position: absolute;
}
.app {
    flex: 1;
    min-width: 0;
    display: flex;
    flex-direction: column;
}

/* Title and menus */
.header {
    background: linear-gradient(#d8d8d8, #bababa);
    border-top: 1px solid #999;
    border-bottom: 1px solid #6f6f6f;
    box-shadow: inset 0 2px #e8e8e8;
}
.title-row {
    display: grid;
    grid-template-columns: 1fr auto 1fr;
    align-items: center;
    height: 27px;
    padding: 0 8px;
}
.title-row h1 {
    grid-column: 2;
    margin: 0;
    font-size: 12px;
    font-weight: normal;
    color: #444;
}
.window-buttons {
    display: flex;
    justify-content: flex-end;
    gap: 6px;
    padding-bottom: 3px;
}
.menu-row {
    display: flex;
    justify-content: space-between;
    align-items: flex-end;
    height: 26px;
    padding-right: 5px;
}
.menubar {
    display: flex;
    margin-bottom: -1px;
}
.menubar > button {
    height: 20px;
    padding: 0 6px 0 7px;
}
.menubar > button:first-child {
    padding-left: 6px;
}
.menu-holder {
    position: relative;
}
.menu-holder > .open {
    height: 20px;
    background: #a3b8cc;
    border: 1px solid #7a8a99;
    border-right-color: #fff;
    border-bottom: none;
    padding: 0 7px 0 6px;
}
.menu, .submenu {
    position: absolute;
    background: #eee;
    border: 1px solid #6382bf;
    box-shadow: inset 1px 1px #fff;
    z-index: 2;
}
.menu {
    top: 20px;
    left: 0;
    width: 175px;
    padding: 2px 0 1px;
    font-size: 13px;
}
.menu > button {
    position: relative;
    display: block;
    width: 100%;
    height: 27px;
    padding-left: 14px;
    text-align: left;
    white-space: nowrap;
}
.menu > .selected {
    background: #a3b8cc;
    border-top: 1px solid #6382bf;
    border-bottom: 1px solid #fff;
}
.menu > button svg {
    position: absolute;
    right: 4px;
    top: 8px;
}
.submenu {
    top: 134px;
    left: 169px;
    width: 197px;
    padding: 2px 0;
    font-size: 12px;
}
.submenu button {
    display: flex;
    align-items: center;
    gap: 2px;
    width: 100%;
    height: 33px;
    padding-left: 13px;
    text-align: left;
    white-space: nowrap;
    line-height: 16px;
}
.submenu .two-lines {
    height: 37px;
}
.submenu svg, .tools svg {
    filter: drop-shadow(1px 1px 1px rgba(0, 0, 0, 0.3));
}
.watermark {
    position: absolute;
    left: 127px;
    top: 145px;
    z-index: 3;
    display: flex;
    flex-direction: column;
    align-items: center;
    font-family: "Liberation Serif", serif;
    color: rgba(255, 255, 255, 0.5);
    text-shadow: 1px 1px 1px rgba(0, 0, 0, 0.12);
    pointer-events: none;
}
.brand {
    font-size: 22px;
    line-height: 24px;
}
.brand sup {
    font-size: 10px;
    line-height: 1;
}
.site {
    font-size: 10px;
    line-height: 18px;
    font-style: italic;
    font-weight: bold;
}
.header-tools {
    display: flex;
    gap: 10px;
    height: 25px;
}
.monkey {
    display: flex;
    justify-content: center;
    align-items: center;
    width: 30px;
    height: 21px;
    border: 1px solid #666;
    border-radius: 3px;
    background: linear-gradient(#fff, #999);
}
.layouts {
    display: flex;
    height: 21px;
    border-radius: 4px;
    overflow: hidden;
    background: linear-gradient(#555, #222 50%, #4a4a4a);
    border: 1px solid #333;
}
.layouts button {
    display: flex;
    justify-content: center;
    align-items: center;
    width: 29px;
}
.layouts button + button {
    border-left: 1px solid #111;
}

/* Work area */
.workspace {
    flex: 1;
    min-height: 0;
    display: flex;
    flex-direction: column;
    padding: 0 5px;
    background: #ababab;
}
.comments {
    width: 100%;
    height: 80px;
    border: none;
    border-bottom: 1px solid #5f6b80;
    padding: 2px 16px 0 0;
    background: linear-gradient(#e1effe, #bed2ea);
    font-family: "DejaVu Sans", sans-serif;
    font-size: 14px;
    text-align: center;
    color: #222;
}
.panes {
    flex: 1;
    min-height: 0;
    display: flex;
}
.sidebar {
    display: flex;
    flex-direction: column;
    width: 250px;
    background: #fff;
}
.tabs {
    display: flex;
    align-items: flex-end;
    gap: 2px;
    height: 26px;
    padding: 0 5px;
    background: linear-gradient(#c8c8c8, #dcdcdc);
    box-shadow: inset 0 -1px #999;
}
.tab {
    display: flex;
    justify-content: center;
    align-items: center;
    width: 46px;
    height: 22px;
    border: 1px solid #999;
    border-radius: 7px 7px 0 0;
    background: #b4b4b4;
}
.tab.active {
    background: linear-gradient(#fafafa, #e8e8e8);
    border-bottom-color: #e8e8e8;
}
.close {
    margin-left: auto;
    align-self: center;
}
.tab-strip {
    height: 16px;
    background: linear-gradient(#e8e8e8, #f6f6f6);
    border-bottom: 1px solid #aaa;
}
.tree {
    flex: 1;
    min-height: 0;
    overflow: hidden;
    margin: 0;
    padding: 0;
    list-style: none;
    color: #000;
}
.tree li {
    display: flex;
    align-items: center;
    height: 19px;
}
.tree li:nth-child(even) {
    background: #e3eaf4;
}
.tree .root {
    padding-left: 1px;
}
.tree span {
    padding: 2px 0 0 5px;
    line-height: 17px;
    white-space: nowrap;
}
.tree .builtin {
    color: #4a568c;
}
.tree .picked span {
    background: #bdbdbd;
}
.macro-bar {
    display: flex;
    gap: 6px;
    height: 25px;
    padding: 3px 1px;
    border-top: 1px solid #999;
    background: linear-gradient(#f2f2f2, #dadada);
}
.macro-bar button {
    display: flex;
    justify-content: center;
    align-items: center;
    width: 18px;
    height: 16px;
    border: 1px solid #777;
    font-family: "DejaVu Sans", sans-serif;
    color: #777;
}
.macro-bar .rec {
    width: 36px;
    margin-left: auto;
    gap: 2px;
    font-style: italic;
}
.figure {
    flex: 1;
    min-width: 0;
    display: flex;
    flex-direction: column;
    border-left: 5px solid #ababab;
    background: #f5f5f5;
}
.canvas {
    flex: 1;
    width: 100%;
    min-height: 0;
}
.status {
    height: 25px;
    margin: 0;
    border-top: 1px solid #999;
    background: linear-gradient(#f2f2f2, #dadada);
    font-size: 13px;
    line-height: 24px;
    text-align: center;
}

/* Bottom bar */
.footer {
    display: flex;
    justify-content: space-between;
    align-items: flex-start;
    height: 32px;
    padding-left: 275px;
    border-top: 1px solid #999;
    background: linear-gradient(#dcdcdc, #bcbcbc);
}
.figure-tab {
    display: flex;
    align-items: center;
    width: 149px;
    height: 23px;
    margin-top: -1px;
    padding-left: 4px;
    border: 1px solid #999;
    border-top: none;
    border-radius: 0 0 6px 6px;
    background: linear-gradient(#dadada, #f2f2f2);
    font-size: 11px;
    color: #1a66a8;
}
.footer-tools {
    display: flex;
    align-items: center;
    padding: 7px 2px 0 0;
    gap: 12px;
}
.pager {
    display: flex;
    border: 1px solid #777;
    border-radius: 3px;
    background: #939393;
}
.pager button {
    display: flex;
    justify-content: center;
    align-items: center;
    width: 23px;
    height: 14px;
}
.pager button + button {
    border-left: 1px solid #777;
}
.small {
    display: flex;
    justify-content: center;
    align-items: center;
    width: 22px;
    height: 16px;
    border: 1px solid #666;
    border-radius: 4px;
    background: linear-gradient(#fff, #ddd);
}
.small + .small {
    margin-left: 1px;
}
.grip {
    align-self: flex-end;
    margin-left: -3px;
}

/* Palette */
.palette {
    width: 169px;
    border-left: 1px solid #888;
    background: linear-gradient(90deg, #bbb, #e2e2e2 50%, #bbb);
    color: #333;
}
.section {
    display: flex;
    align-items: center;
    gap: 8px;
    width: 100%;
    height: 17px;
    padding-left: 1px;
    border-top: 1px solid #888;
    border-bottom: 1px solid #888;
    background: linear-gradient(#dadada, #b0b0b0);
    font-size: 11px;
    white-space: nowrap;
}
.section span {
    padding-top: 2px;
    line-height: 13px;
}
.tools {
    display: grid;
    grid-template-columns: repeat(6, 27px);
    grid-auto-rows: 27px;
    gap: 1px;
    padding: 1px 0 0 1px;
    background: #fafafa;
}
.tools svg {
    width: 27px;
    height: 27px;
}
.tools.seven {
    grid-template-columns: repeat(7, 23px);
    grid-auto-rows: 23px;
    padding-top: 0;
}
.tools.seven svg {
    width: 23px;
    height: 23px;
}
.on {
    background: #c7c7dd;
}
.palette h2 {
    margin: 0;
    height: 21px;
    border: solid #fafafa;
    border-width: 3px 3px 4px;
    background: #eaeafa;
    outline: 1px solid #c4c4f4;
    outline-offset: -4px;
    font-size: 12px;
    line-height: 16px;
    text-align: center;
    color: #606060;
}
.black { color: #111; }
.ink { color: #222438; }
.green { color: #0a870a; }
.blue { color: #0808b8; }
.brown { color: #a06a08; }
.teal { color: #2a8a8a; }
.red { color: #c00808; }
.serif-glyph { font: bold 18px "Liberation Serif", serif; fill: #444; }
.bold-glyph { font: bold 10px "Liberation Sans", sans-serif; fill: #333; }
.fx-glyph { font: bold 12px "Liberation Sans", sans-serif; fill: #333; }
.ask-glyph { font: bold 12px "Liberation Sans", sans-serif; fill: #777; }
.name-glyph { font: bold 14px "Liberation Sans", sans-serif; fill: #222; }
.value-glyph { font: bold 11px "Liberation Sans", sans-serif; fill: #222; }
.letter-glyph { font: bold 11px "DejaVu Sans", sans-serif; fill: #111; }
.heavy-glyph { font: bold 14px "DejaVu Sans", sans-serif; fill: #111; }
.large-glyph { font: 18px "DejaVu Sans", sans-serif; fill: #111; }
.field-glyph { font: 9px "DejaVu Sans", sans-serif; fill: #333; }
.ok-glyph { font: bold 8px "DejaVu Sans", sans-serif; fill: #557; }
.axis-glyph { font: bold 9px "Liberation Serif", serif; fill: #222; }
```
